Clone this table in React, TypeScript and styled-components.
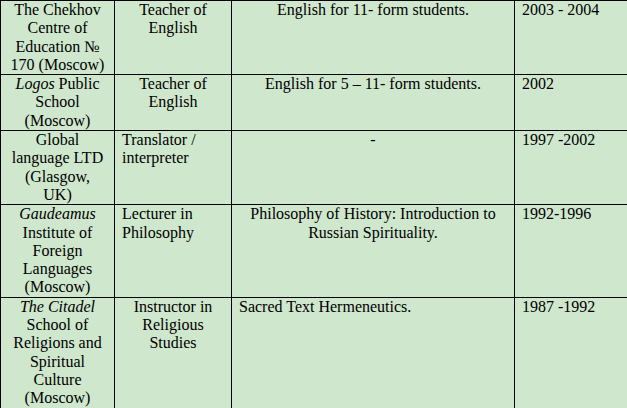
import React from "react";
import styled, { createGlobalStyle } from "styled-components";

const GlobalStyle = createGlobalStyle`
  html, body {
    margin: 0;
    padding: 0;
    background: #ffffff;
    overflow: hidden;
  }
`;

const Table = styled.table`
  border-collapse: collapse;
  table-layout: fixed;
  width: 640px;
  font-family: "Liberation Serif", "Times New Roman", serif;
  font-size: 16px;
  line-height: 18.3px;
  color: #000000;
  background: #cfe7cc;
`;

const Col = styled.col<{ $w: number }>`
  width: ${(p) => p.$w}px;
`;

const Cell = styled.td<{ $align?: "left" | "center" }>`
  border: 1px solid #000000;
  padding: 0 7px;
  vertical-align: top;
  text-align: ${(p) => p.$align ?? "left"};
  white-space: nowrap;
`;

const Name = styled.i`
  font-style: italic;
`;

type Job = {
  place: React.ReactNode;
  placeAlign: "left" | "center";
  role: React.ReactNode;
  roleAlign: "left" | "center";
  subject: React.ReactNode;
  subjectAlign: "left" | "center";
  years: string;
};

const jobs: Job[] = [
  {
    place: (
      <>
        The Chekhov
        <br />
        Centre of
        <br />
        Education №
        <br />
        170 (Moscow)
      </>
    ),
    placeAlign: "center",
    role: (
      <>
        Teacher of
        <br />
        English
      </>
    ),
    roleAlign: "center",
    subject: "English for 11- form students.",
    subjectAlign: "center",
    years: "2003 - 2004",
  },
  {
    place: (
      <>
        <Name>Logos</Name> Public
        <br />
        School
        <br />
        (Moscow)
      </>
    ),
    placeAlign: "center",
    role: (
      <>
        Teacher of
        <br />
        English
      </>
    ),
    roleAlign: "center",
    subject: "English for 5 – 11- form students.",
    subjectAlign: "center",
    years: "2002",
  },
  {
    place: (
      <>
        Global
        <br />
        language LTD
        <br />
        (Glasgow,
        <br />
        UK)
      </>
    ),
    placeAlign: "center",
    role: (
      <>
        Translator /
        <br />
        interpreter
      </>
    ),
    roleAlign: "left",
    subject: "-",
    subjectAlign: "center",
    years: "1997 -2002",
  },
  {
    place: (
      <>
        <Name>Gaudeamus</Name>
        <br />
        Institute of
        <br />
        Foreign
        <br />
        Languages
        <br />
        (Moscow)
      </>
    ),
    placeAlign: "center",
    role: (
      <>
        Lecturer in
        <br />
        Philosophy
      </>
    ),
    roleAlign: "left",
    subject: (
      <>
        Philosophy of History: Introduction to
        <br />
        Russian Spirituality.
      </>
    ),
    subjectAlign: "center",
    years: "1992-1996",
  },
  {
    place: (
      <>
        <Name>The Citadel</Name>
        <br />
        School of
        <br />
        Religions and
        <br />
        Spiritual
        <br />
        Culture
        <br />
        (Moscow)
      </>
    ),
    placeAlign: "center",
    role: (
      <>
        Instructor in
        <br />
        Religious
        <br />
        Studies
      </>
    ),
    roleAlign: "center",
    subject: "Sacred Text Hermeneutics.",
    subjectAlign: "left",
    years: "1987 -1992",
  },
];

export default function App() {
  return (
    <>
      <GlobalStyle />
      <Table>
        <colgroup>
          <Col $w={114} />
          <Col $w={117} />
          <Col $w={283} />
          <Col $w={126} />
        </colgroup>
        <tbody>
          {jobs.map((job, i) => (
            <tr key={i}>
              <Cell $align={job.placeAlign}>{job.place}</Cell>
              <Cell $align={job.roleAlign}>{job.role}</Cell>
              <Cell $align={job.subjectAlign}>{job.subject}</Cell>
              <Cell>{job.years}</Cell>
            </tr>
          ))}
        </tbody>
      </Table>
    </>
  );
}
